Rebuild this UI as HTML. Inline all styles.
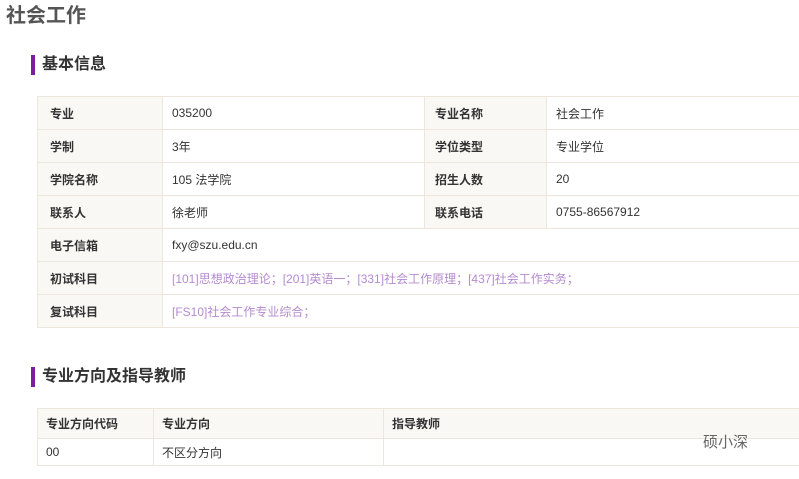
<!DOCTYPE html>
<html><head><meta charset="utf-8"><style>
body{margin:0;width:799px;height:479px;overflow:hidden;background:#fff;font-family:"Liberation Sans","Noto Sans CJK SC",sans-serif;position:relative}
.a{position:absolute;white-space:nowrap}
h1{position:absolute;left:6px;top:3px;margin:0;font-size:20px;font-weight:bold;color:#555;line-height:26px}
.sec{position:absolute;left:31px;font-size:16px;font-weight:bold;color:#333;line-height:20px;padding-left:7px;border-left:4px solid #7b1fa2}
.c{position:absolute;box-sizing:border-box;border:1px solid #ece6dc;font-size:12px;color:#333;padding-left:12px;display:flex;align-items:center;margin:0 0 0 -1px}
.l{background:#faf8f5;font-weight:bold}
.p{color:#b58ad0}
.t2 .c{padding-left:8px}
</style></head><body>
<h1>社会工作</h1>
<div class="sec" style="top:55px">基本信息</div>
<div>
<div class="c l" style="left:38px;top:96px;width:126px;height:34px">专业</div>
<div class="c" style="left:163px;top:96px;width:263px;height:34px;padding-left:9px">035200</div>
<div class="c l" style="left:425px;top:96px;width:123px;height:34px;padding-left:10px">专业名称</div>
<div class="c" style="left:547px;top:96px;width:260px;height:34px;padding-left:9px">社会工作</div>

<div class="c l" style="left:38px;top:129px;width:126px;height:34px">学制</div>
<div class="c" style="left:163px;top:129px;width:263px;height:34px;padding-left:9px">3年</div>
<div class="c l" style="left:425px;top:129px;width:123px;height:34px;padding-left:10px">学位类型</div>
<div class="c" style="left:547px;top:129px;width:260px;height:34px;padding-left:9px">专业学位</div>

<div class="c l" style="left:38px;top:162px;width:126px;height:34px">学院名称</div>
<div class="c" style="left:163px;top:162px;width:263px;height:34px;padding-left:9px">105 法学院</div>
<div class="c l" style="left:425px;top:162px;width:123px;height:34px;padding-left:10px">招生人数</div>
<div class="c" style="left:547px;top:162px;width:260px;height:34px;padding-left:9px">20</div>

<div class="c l" style="left:38px;top:195px;width:126px;height:34px">联系人</div>
<div class="c" style="left:163px;top:195px;width:263px;height:34px;padding-left:9px">徐老师</div>
<div class="c l" style="left:425px;top:195px;width:123px;height:34px;padding-left:10px">联系电话</div>
<div class="c" style="left:547px;top:195px;width:260px;height:34px;padding-left:9px">0755-86567912</div>

<div class="c l" style="left:38px;top:228px;width:126px;height:34px">电子信箱</div>
<div class="c" style="left:163px;top:228px;width:644px;height:34px;padding-left:9px">fxy@szu.edu.cn</div>
<div class="c l" style="left:38px;top:261px;width:126px;height:34px">初试科目</div>
<div class="c p" style="left:163px;top:261px;width:644px;height:34px;padding-left:9px">[101]思想政治理论；[201]英语一；[331]社会工作原理；[437]社会工作实务；</div>
<div class="c l" style="left:38px;top:294px;width:126px;height:34px">复试科目</div>
<div class="c p" style="left:163px;top:294px;width:644px;height:34px;padding-left:9px">[FS10]社会工作专业综合；</div>
</div>
<div class="sec" style="top:367px">专业方向及指导教师</div>
<div class="t2">
<div class="c l" style="left:38px;top:408px;width:117px;height:31px">专业方向代码</div>
<div class="c l" style="left:154px;top:408px;width:231px;height:31px">专业方向</div>
<div class="c l" style="left:384px;top:408px;width:423px;height:31px">指导教师</div>
<div class="c" style="left:38px;top:438px;width:117px;height:28px">00</div>
<div class="c" style="left:154px;top:438px;width:231px;height:28px">不区分方向</div>
<div class="c" style="left:384px;top:438px;width:423px;height:28px"></div>
</div>
<div class="a" style="left:703px;top:431px;font-size:15px;color:#666">硕小深</div>
</body></html>
